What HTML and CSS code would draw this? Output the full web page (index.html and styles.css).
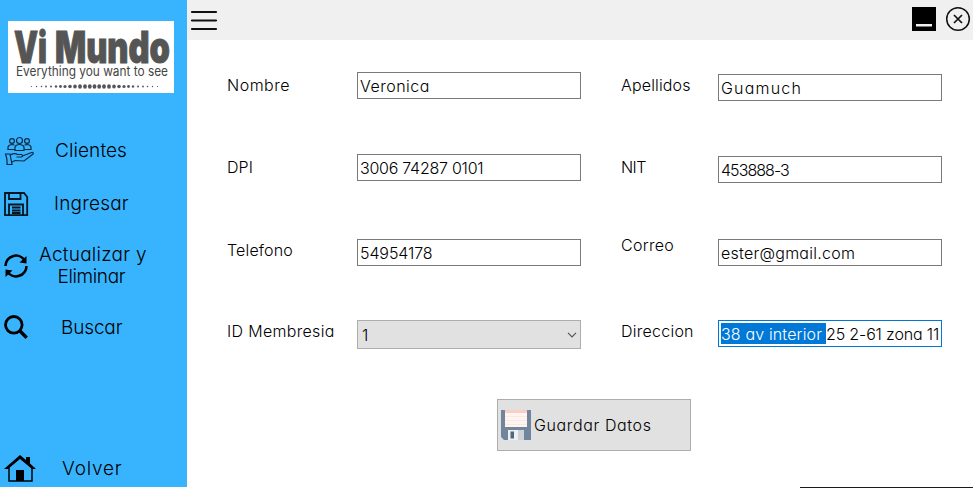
FILE: index.html
```html
<!DOCTYPE html>
<html lang="es">
<head>
<meta charset="utf-8">
<title>Vi Mundo</title>
<link rel="stylesheet" href="styles.css">
</head>
<body>
<div class="window">
  <aside class="sidebar">
    <svg class="logo" viewBox="0 0 166 72" width="166" height="72">
      <rect width="166" height="72" fill="#fff"/>
      <g class="logo-name">
        <text x="6" y="42" textLength="33" lengthAdjust="spacingAndGlyphs">Vi</text>
        <text x="47" y="42" textLength="115" lengthAdjust="spacingAndGlyphs">Mundo</text>
      </g>
      <text class="logo-tag" x="8" y="55" textLength="152" lengthAdjust="spacingAndGlyphs">Everything you want to see</text>
      <g fill="#555">
        <g id="dots-left">
          <circle cx="23.500" cy="65.500" r=".6"/><circle cx="28.500" cy="65.500" r=".7"/><circle cx="33.500" cy="65.500" r=".8"/><circle cx="38" cy="65.500" r=".9"/><circle cx="43" cy="65.500" r="1"/><circle cx="48" cy="65.500" r="1.200"/><circle cx="52.500" cy="65.500" r="1.400"/><circle cx="57" cy="65.500" r="1.600"/><circle cx="62" cy="65.500" r="1.800"/><ellipse cx="67" cy="65.500" rx="1.800" ry="2.100"/><ellipse cx="72" cy="65.500" rx="1.900" ry="2.200"/><ellipse cx="77" cy="65.500" rx="1.900" ry="2.300"/><ellipse cx="81.800" cy="65.500" rx="1.900" ry="2.300"/>
        </g>
        <ellipse cx="86.500" cy="65.500" rx="1.900" ry="2.300"/>
        <use href="#dots-left" transform="translate(173 0) scale(-1 1)"/>
      </g>
    </svg>
    <nav class="menu">
      <a class="item clientes">
        <svg width="30" height="30" viewBox="0 0 30 30" fill="none" stroke="#0b2a42" stroke-width="1.200">
          <circle cx="15.500" cy="4.500" r="3"/><circle cx="8" cy="5" r="2.400"/><circle cx="23" cy="5" r="2.400"/>
          <path d="M11 14.500V11q1-2.500 4.500-2.500T20 11v3.500zM10.500 13.500H4V11q1-2.500 4-2.500l2.500.5M20.500 13.500H27V11q-1-2.500-4-2.500l-2.500.5"/>
          <path d="M1.500 18h4.500l2 10.500H3Q3.500 23 1.500 18zM6.500 19q4-2.500 7-.5h4q2 1 0 2.500h-5M18.500 20l9-3.500q2.500-.5 1.500 1.500l-9 7-9-.5-3 1.500"/>
        </svg>
        <span class="s-clientes">Clientes</span>
      </a>
      <a class="item ingresar">
        <svg width="25" height="25" viewBox="0 0 25 25" fill="none" stroke="#06151f" stroke-width="1.800">
          <path d="M1 1h19l3.200 4v18.200H1zM5 1v6h11.500V1M5 23V12.500h14V23M8 15.500h8.500M8 18.500h8.500M8 21h8.500"/>
        </svg>
        <span class="s-ingresar">Ingresar</span>
      </a>
      <a class="item actualizar">
        <svg width="25" height="25" viewBox="0 0 25 25" fill="none" stroke="#000" stroke-width="2.600">
          <path d="M1.500 12A10.500 10.500 0 0 1 20.500 6M22.500 12A10.500 10.500 0 0 1 3.500 18"/>
          <path fill="#000" stroke="none" d="M22.500 2v7.500l-7-1zM1.500 23v-7.500l7 1z"/>
        </svg>
        <span class="s-actualizar">Actualizar y<br><span class="s-eliminar">Eliminar</span></span>
      </a>
      <a class="item buscar">
        <svg width="25" height="25" viewBox="0 0 25 25" fill="none" stroke="#000">
          <circle cx="9.800" cy="9.800" r="8.300" stroke-width="2.800"/><path stroke-width="3.400" d="M15.500 15.500l7.200 7.200"/>
        </svg>
        <span class="s-buscar">Buscar</span>
      </a>
      <a class="item volver">
        <svg width="32" height="28" viewBox="0 0 32 28">
          <path fill="none" stroke="#000" stroke-width="1.500" d="M5 12v14h23V12"/>
          <path d="M12 26V15h8v11zM16 0l6 5V2h4v6.500l6 5.500H28L16 4 4 14H0z"/>
        </svg>
        <span class="s-volver">Volver</span>
      </a>
    </nav>
  </aside>
  <main class="main">
    <header class="bar">
      <svg class="burger" width="28" height="22" viewBox="0 0 28 22" stroke="#111" stroke-width="2.200" stroke-linecap="round"><path d="M2 2h24M2 10.500h24M2 19h24"/></svg>
      <div class="controls">
        <svg width="24" height="24" viewBox="0 0 24 24"><path d="M0 0h24v24H0z"/><path fill="#f0f0f0" d="M4 17h16v2.500H4z"/></svg>
        <svg width="26" height="26" viewBox="0 0 26 26" fill="none" stroke="#111" stroke-width="1.500"><circle cx="13" cy="13" r="11.300"/><path stroke-width="1.700" d="M9 9l8 8M17 9l-8 8"/></svg>
      </div>
    </header>
    <form class="form">
      <label class="s-nombre">Nombre</label><div class="field raise s-veronica">Veronica</div>
      <label class="s-apellidos">Apellidos</label><div class="field raise lower s-guamuch">Guamuch</div>
      <label class="s-dpi">DPI</label><div class="field raise s-dpinum">3006 74287 0101</div>
      <label class="s-nit">NIT</label><div class="field raise lower s-nitnum">453888-3</div>
      <label class="high s-telefono">Telefono</label><div class="field raise s-tel">54954178</div>
      <label class="higher s-correo">Correo</label><div class="field raise s-mail">ester@gmail.com</div>
      <label class="high s-id">ID Membresia</label>
      <div class="field select">1<svg width="10" height="6" viewBox="0 0 10 6" fill="none" stroke="#555" stroke-width="1.200"><path d="M1 .8l4 4 4-4"/></svg></div>
      <label class="high s-direccion">Direccion</label>
      <div class="field focus"><span class="selected">38 av interior </span><span class="s-zona">25 2-61 zona 11</span></div>
    </form>
    <div class="save">
      <svg width="32" height="32" viewBox="0 0 32 32">
        <path fill="#71869d" d="M1 1h30v30H4l-3-3z"/><path fill="#fff4f0" d="M5 1h22v17H5z"/><path fill="#f8cfc4" d="M5 1h22v3H5z"/>
        <path stroke="#f9e9e4" d="M5 7.500h22M5 11.500h22M5 15.500h22"/><path fill="#eef0f2" d="M8 21h16v10H8z"/><path fill="#cfd3d8" d="M18 21h6v10h-6z"/><path fill="#52677f" d="M10.500 22.500h3.500v7h-3.500z"/>
      </svg>
      <span>Guardar Datos</span>
    </div>
  </main>
</div>
<div class="edge"></div>
</body>
</html>
```
FILE: styles.css
```css
* { box-sizing: border-box; }
body {
  margin: 0;
  background: #fff;
  color: #000;
  font: 300 16px/20px Inter, "Open Sans", sans-serif;
  font-feature-settings: "cv11";
  overflow: hidden;
}
svg { display: block; flex: none; }
.window { display: flex; height: 487px; }
.sidebar { width: 187px; background: #38b4ff; padding-top: 21px; display: flex; flex-direction: column; }
.logo { margin-left: 8px; }
.logo-name { font: 900 44px Inter; fill: #555; stroke: #555; stroke-width: 1px; }
.logo-tag { font: 400 13px Inter; fill: #444; stroke: #fff; stroke-width: 1.5px; paint-order: stroke; }

.menu { flex: 1; display: flex; flex-direction: column; font-size: 19px; line-height: 22px; }
.item { display: flex; align-items: center; padding-left: 4px; }
.item > span { display: block; }
.clientes { height: 30px; margin-top: 43px; }
.clientes > span { margin-left: 21px; }
.ingresar { height: 26px; margin-top: 25px; }
.ingresar > span { margin-left: 25px; }
.actualizar { height: 44px; margin-top: 27px; }
.actualizar > span { margin-left: 10px; text-align: center; }
.buscar { height: 25px; margin-top: 27px; }
.buscar > span { margin-left: 32px; }
.volver { height: 28px; margin-top: auto; margin-bottom: 4px; }
.volver > span { margin-left: 26px; }

.main { flex: 1; }
.bar { height: 40px; background: #f0f0f0; padding: 0 2px 0 3px; display: flex; align-items: center; justify-content: space-between; }
.burger { margin-top: 2px; }
.controls { display: flex; align-items: center; gap: 9px; margin-top: -3px; }

.form { display: grid; grid-template-columns: 130px 264px 97px 224px; grid-template-rows: 82px 85px 81px 79px; padding: 32px 0 0 40px; align-items: start; }
.form label { margin-top: 3px; white-space: nowrap; }
.form label.high { margin-top: 1px; }
.form label.higher { margin-top: -4px; }
.field { width: 224px; height: 27px; border: 1px solid #7a7a7a; padding: 4px 0 0 2px; white-space: pre; }
.raise { padding-top: 3px; }
.field.lower { margin-top: 2px; }
.select { height: 29px; background: #e1e1e1; border-color: #adadad; padding: 0 3px 0 4px; display: flex; align-items: center; justify-content: space-between; }
.focus { border-color: #0078d7; display: flex; padding: 2px 0 0 2px; line-height: 22px; }
.selected { width: 105px; height: 21px; background: #0078d7; color: #fff; letter-spacing: .15px; }

.save { width: 194px; height: 52px; margin-left: 310px; border: 1px solid #adadad; background: #e1e1e1; display: flex; align-items: center; gap: 2px; padding-left: 2px; letter-spacing: .62px; }
.edge { height: 1px; margin-left: 800px; background: #1b1b1b; }

.s-clientes { letter-spacing: .1px; }
.s-ingresar { letter-spacing: .2px; }
.s-actualizar { letter-spacing: .25px; }
.s-eliminar { letter-spacing: -.35px; margin-right: 3px; }
.s-buscar { letter-spacing: -.15px; }
.s-volver { letter-spacing: .8px; }
.s-nombre { letter-spacing: .5px; }
.s-dpi { letter-spacing: .1px; }
.s-telefono { letter-spacing: .15px; }
.s-id { letter-spacing: .32px; }
.s-apellidos { letter-spacing: .15px; }
.s-nit { letter-spacing: -.6px; }
.s-correo { letter-spacing: .3px; }
.s-direccion { letter-spacing: .25px; }
.s-veronica { letter-spacing: .5px; }
.s-guamuch { letter-spacing: 1.2px; }
.s-dpinum { letter-spacing: -.25px; }
.s-tel { letter-spacing: -.1px; }
.s-nitnum { letter-spacing: -.95px; }
.s-mail { letter-spacing: .25px; }
.s-zona { letter-spacing: -.15px; }
```
